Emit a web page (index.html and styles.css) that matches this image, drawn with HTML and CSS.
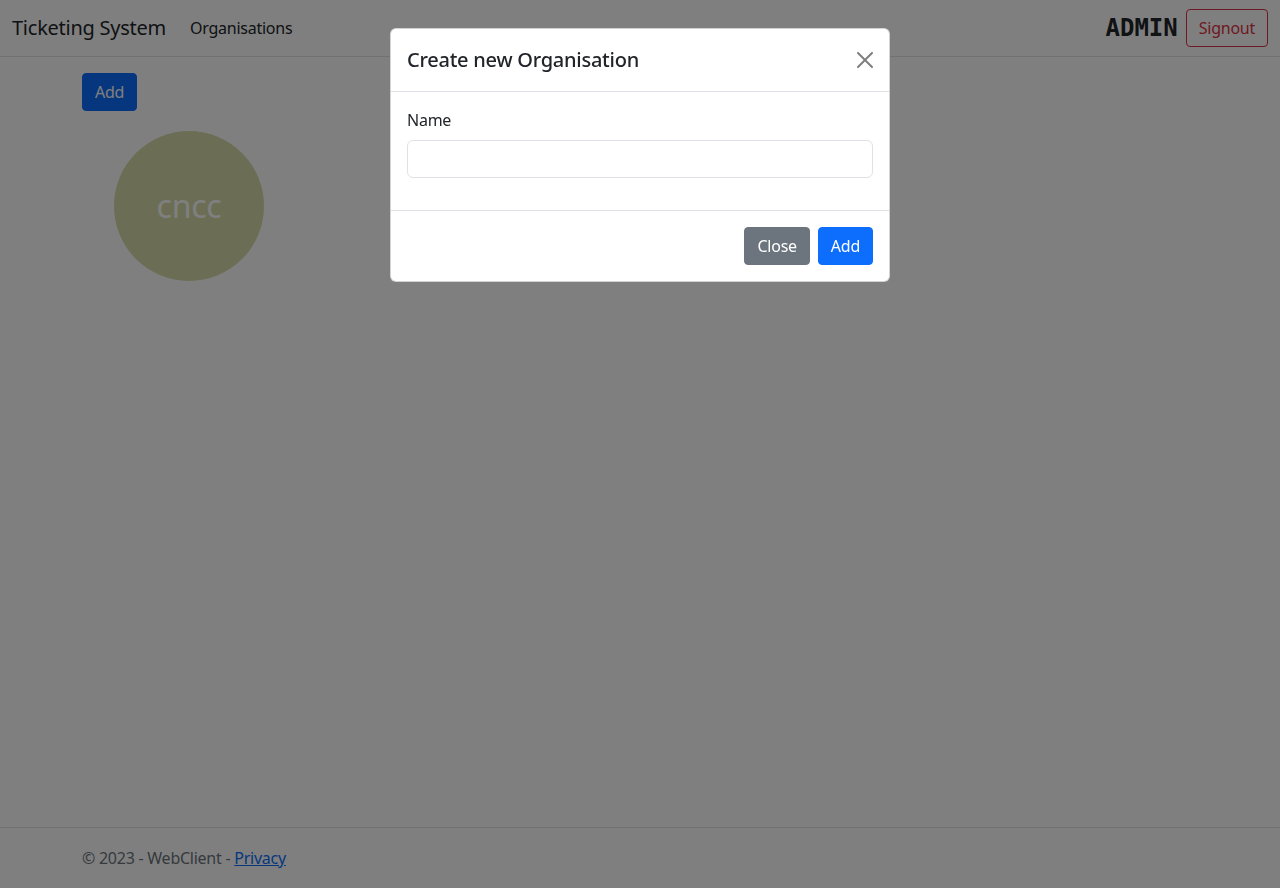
FILE: index.html
```html
<!DOCTYPE html>
<html lang="en">
<head>
<meta charset="utf-8">
<title>Ticketing System</title>
<link rel="stylesheet" href="styles.css">
</head>
<body>
<div class="page">
  <header class="navbar">
    <div class="nav-left">
      <a class="brand" href="#">Ticketing System</a>
      <a class="nav-link" href="#">Organisations</a>
    </div>
    <div class="nav-right">
      <span class="user">ADMIN</span>
      <button class="btn btn-outline-danger">Signout</button>
    </div>
  </header>
  <main class="container">
    <button class="btn btn-primary">Add</button>
    <div class="orgs">
      <div class="org-circle">cncc</div>
    </div>
  </main>
  <footer class="footer">
    <div class="container footer-inner">© 2023 - WebClient - <a href="#" class="link">Privacy</a></div>
  </footer>
</div>

<div class="backdrop"></div>
<div class="modal-wrap">
  <div class="modal">
    <div class="modal-header">
      <h5 class="modal-title">Create new Organisation</h5>
      <button class="btn-close" aria-label="Close">
        <svg viewBox="0 0 16 16" width="16" height="16"><path d="M.293.293a1 1 0 0 1 1.414 0L8 6.586 14.293.293a1 1 0 1 1 1.414 1.414L9.414 8l6.293 6.293a1 1 0 0 1-1.414 1.414L8 9.414l-6.293 6.293a1 1 0 0 1-1.414-1.414L6.586 8 .293 1.707a1 1 0 0 1 0-1.414z" fill="#000"/></svg>
      </button>
    </div>
    <div class="modal-body">
      <label class="form-label" for="name">Name</label>
      <input id="name" class="form-control" type="text">
    </div>
    <div class="modal-footer">
      <button class="btn btn-secondary">Close</button>
      <button class="btn btn-primary">Add</button>
    </div>
  </div>
</div>
</body>
</html>
```

FILE: styles.css
```css
* { box-sizing: border-box; }
html, body { margin: 0; padding: 0; height: 100%; }
body {
  font-family: "Noto Sans", "Open Sans", sans-serif;
  font-size: 16px;
  line-height: 1.5;
  letter-spacing: -0.25px;
  color: #212529;
  background: #fff;
}
.page {
  min-height: 100vh;
  display: flex;
  flex-direction: column;
}
.navbar {
  height: 57px;
  border-bottom: 1px solid #dee2e6;
  display: flex;
  align-items: center;
  justify-content: space-between;
  padding: 0 12px;
}
.nav-left { display: flex; align-items: center; }
.brand {
  font-size: 20px;
  color: #212529;
  text-decoration: none;
  margin-right: 16px;
  line-height: 30px;
}
.nav-link {
  color: #212529;
  text-decoration: none;
  padding: 8px;
}
.nav-right { display: flex; align-items: center; gap: 8px; }
.user {
  font-family: "DejaVu Sans Mono", "Liberation Mono", monospace;
  font-weight: bold;
  font-size: 24px;
  line-height: 1;
  letter-spacing: 0;
}
.btn {
  font-family: inherit;
  font-size: 16px;
  letter-spacing: inherit;
  line-height: 24px;
  padding: 6px 12px;
  border-radius: 4px;
  border: 1px solid transparent;
  cursor: pointer;
}
.btn-primary { background: #0d6efd; border-color: #0d6efd; color: #fff; }
.btn-secondary { background: #6c757d; border-color: #6c757d; color: #fff; }
.btn-outline-danger { background: transparent; border-color: #dc3545; color: #dc3545; }
.container {
  width: 1140px;
  margin: 0 auto;
  padding: 0 12px;
}
main.container {
  flex: 1;
  padding-top: 16px;
}
.orgs {
  display: flex;
  padding: 20px 32px;
}
.org-circle {
  width: 150px;
  height: 150px;
  border-radius: 50%;
  background: #d7dcab;
  color: #fff;
  font-size: 32px;
  display: flex;
  align-items: center;
  justify-content: center;
}
.footer {
  border-top: 1px solid #dee2e6;
  height: 61px;
  line-height: 60px;
  color: #6c757d;
}
.link { color: #0d6efd; }

.backdrop {
  position: fixed;
  inset: 0;
  background: rgba(0, 0, 0, 0.5);
}
.modal-wrap {
  position: fixed;
  inset: 0;
  display: flex;
  justify-content: center;
  align-items: flex-start;
  padding-top: 28px;
}
.modal {
  width: 500px;
  background: #fff;
  border: 1px solid rgba(0, 0, 0, 0.175);
  border-radius: 6px;
}
.modal-header {
  display: flex;
  align-items: center;
  justify-content: space-between;
  padding: 16px;
  border-bottom: 1px solid #dee2e6;
}
.modal-title {
  margin: 0;
  font-size: 20px;
  font-weight: 500;
  line-height: 30px;
}
.btn-close {
  width: 32px;
  height: 32px;
  padding: 8px;
  margin: -8px -8px -8px auto;
  border: 0;
  background: transparent;
  opacity: 0.5;
  display: flex;
  align-items: center;
  justify-content: center;
}
.modal-body { padding: 16px 16px 32px; }
.form-label { display: block; margin-bottom: 8px; }
.form-control {
  display: block;
  width: 100%;
  height: 38px;
  padding: 6px 12px;
  font-family: inherit;
  font-size: 16px;
  border: 1px solid #dee2e6;
  border-radius: 6px;
  background: #fff;
}
.modal-footer {
  display: flex;
  justify-content: flex-end;
  gap: 8px;
  padding: 16px;
  border-top: 1px solid #dee2e6;
}
```
